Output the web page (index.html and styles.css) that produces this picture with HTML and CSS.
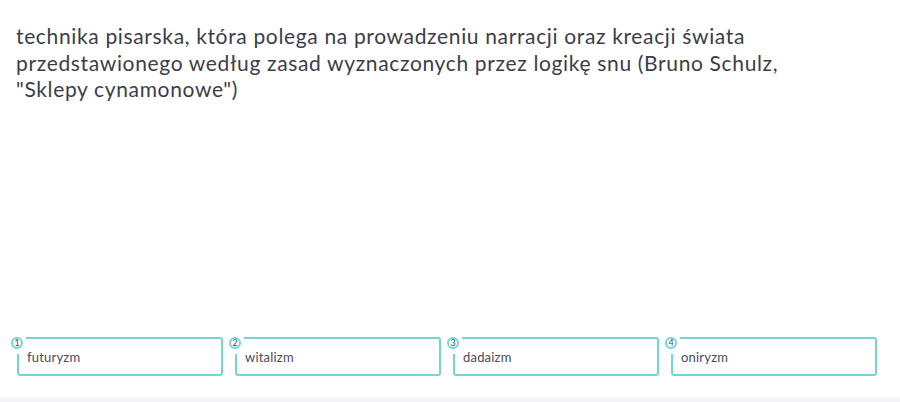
FILE: index.html
```html
<!DOCTYPE html>
<html lang="pl">
<head>
<meta charset="utf-8">
<link rel="stylesheet" href="styles.css">
</head>
<body>
<div class="page">
  <main class="main">
    <p class="question">technika pisarska, która polega na prowadzeniu narracji oraz kreacji świata przedstawionego według zasad wyznaczonych przez logikę snu (Bruno Schulz, "Sklepy cynamonowe")</p>
    <div class="options">
      <div class="option"><span class="badge"><span class="num">1</span></span><span class="label">futuryzm</span></div>
      <div class="option"><span class="badge"><span class="num">2</span></span><span class="label">witalizm</span></div>
      <div class="option"><span class="badge"><span class="num">3</span></span><span class="label">dadaizm</span></div>
      <div class="option"><span class="badge"><span class="num">4</span></span><span class="label">oniryzm</span></div>
    </div>
  </main>
  <footer class="footer"></footer>
</div>
</body>
</html>
```
FILE: styles.css
```css
html, body {
  margin: 0;
  padding: 0;
  background: #ffffff;
}
.page {
  height: 402px;
  display: flex;
  flex-direction: column;
  font-family: Lato, "Open Sans", sans-serif;
  color: #3b3d4a;
}
.main {
  flex: 1;
  display: flex;
  flex-direction: column;
  padding: 23px 23px 22px 16px;
}
.question {
  margin: 0;
  font-size: 21px;
  line-height: 26.5px;
  letter-spacing: 0.65px;
  width: 830px;
}
.options {
  margin-top: auto;
  margin-left: 1px;
  display: grid;
  grid-template-columns: repeat(4, 1fr);
  gap: 12px;
}
.option {
  position: relative;
  height: 39px;
  box-sizing: border-box;
  border: 2px solid #72d6d1;
  border-radius: 3px;
  display: flex;
  align-items: center;
  padding-left: 8px;
  padding-top: 1px;
}
.label {
  font-size: 13px;
  letter-spacing: 0.2px;
  color: #4a4b57;
}
.badge {
  position: absolute;
  left: -9px;
  top: -2px;
  padding: 0 3px 5px 1px;
  background: #ffffff;
  display: block;
}
.num {
  display: block;
  width: 8px;
  height: 8px;
  border: 2px solid #72d6d1;
  border-radius: 50%;
  font-size: 9px;
  line-height: 8px;
  text-align: center;
  color: #4a4b57;
}
.footer {
  height: 4px;
  background: #f4f4f8;
}
```
